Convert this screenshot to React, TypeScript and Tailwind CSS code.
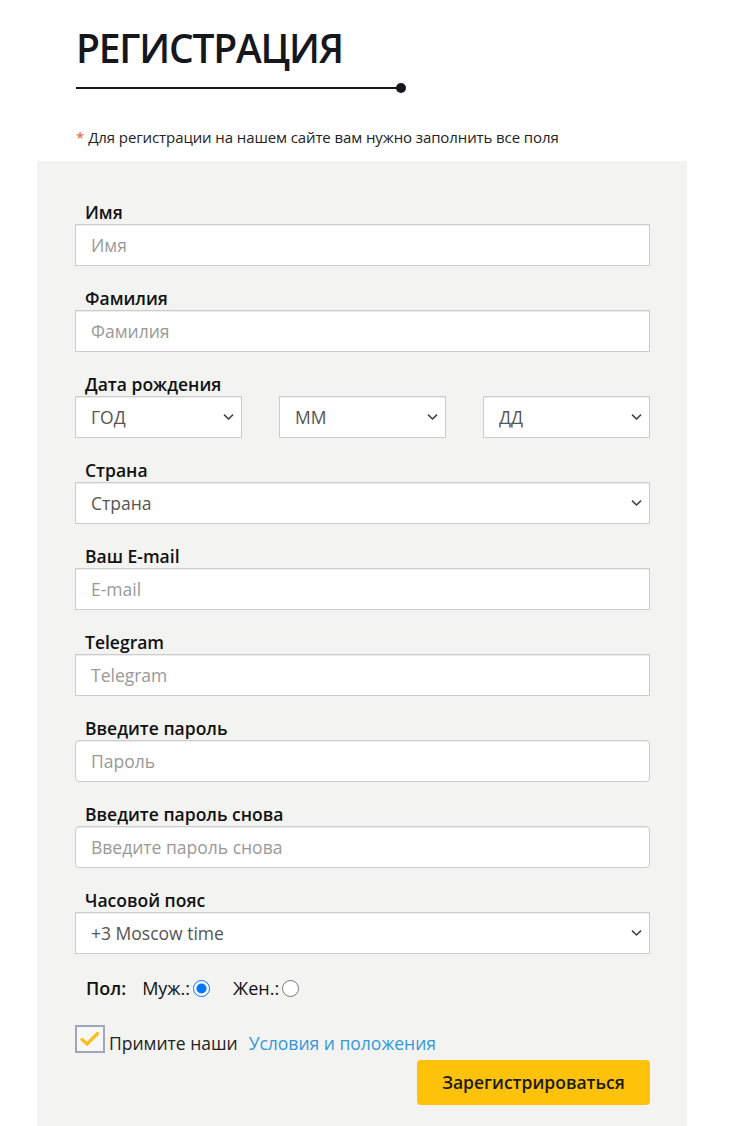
import React from "react";

const inputBase =
  "block w-full h-[42px] bg-white border border-[#cccccc] shadow-[inset_0_1px_1px_rgba(0,0,0,0.075)] px-[15px] text-[17.5px] text-[#555] placeholder:text-[#999] outline-none font-['Open_Sans',sans-serif]";

function Label({ children }: { children: React.ReactNode }) {
  return (
    <div className="pl-[10px] text-[17.5px] leading-[24px] font-semibold text-[#111]">
      {children}
    </div>
  );
}

function Chevron() {
  return (
    <svg
      className="pointer-events-none absolute right-[8px] top-1/2 -translate-y-1/2"
      width="11"
      height="7"
      viewBox="0 0 11 7"
      fill="none"
    >
      <path d="M1 1.2L5.5 5.5L10 1.2" stroke="#444" strokeWidth="1.6" />
    </svg>
  );
}

function Select({ value, className = "" }: { value: string; className?: string }) {
  return (
    <div className={"relative " + className}>
      <select
        className={inputBase + " appearance-none pr-8"}
        defaultValue={value}
      >
        <option>{value}</option>
      </select>
      <Chevron />
    </div>
  );
}

function Field({
  label,
  placeholder,
  rounded = false,
}: {
  label: string;
  placeholder: string;
  rounded?: boolean;
}) {
  return (
    <div className="mb-5">
      <Label>{label}</Label>
      <input
        className={inputBase + (rounded ? " rounded-[4px]" : "")}
        placeholder={placeholder}
        type="text"
      />
    </div>
  );
}

export default function App() {
  return (
    <div className="min-h-[1126px] bg-white font-['Open_Sans',sans-serif] text-[#111]">
      <div className="ml-[37px] w-[650px]">
        <div className="px-[39px] pt-[24px]">
          <h1 className="text-[39px] leading-[48px] font-semibold text-[#16171c] tracking-[-1.2px]">
            РЕГИСТРАЦИЯ
          </h1>
          <div className="mt-[11px] flex items-center w-[330px]">
            <div className="h-[2px] flex-1 bg-[#16171c]" />
            <div className="w-[10px] h-[10px] rounded-full bg-[#16171c] -ml-[1px]" />
          </div>
          <p className="mt-[34px] text-[15px] leading-[20px] text-[#222] tracking-[-0.1px]">
            <span className="text-[#f0542d] mr-[4px]">*</span>
            Для регистрации на нашем сайте вам нужно заполнить все поля
          </p>
        </div>

        <div className="mt-[14px] bg-[#f3f3f2] pl-[38px] pr-[37px] pt-[39px] pb-[24px]">
          <Field label="Имя" placeholder="Имя" />
          <Field label="Фамилия" placeholder="Фамилия" />

          <div className="mb-5">
            <Label>Дата рождения</Label>
            <div className="flex justify-between">
              <Select value="ГОД" className="w-[167px]" />
              <Select value="ММ" className="w-[167px]" />
              <Select value="ДД" className="w-[167px]" />
            </div>
          </div>

          <div className="mb-5">
            <Label>Страна</Label>
            <Select value="Страна" />
          </div>

          <Field label="Ваш E-mail" placeholder="E-mail" />
          <Field label="Telegram" placeholder="Telegram" />
          <Field label="Введите пароль" placeholder="Пароль" rounded />
          <Field
            label="Введите пароль снова"
            placeholder="Введите пароль снова"
            rounded
          />

          <div className="mb-5 mt-[5px]">
            <Label>Часовой пояс</Label>
            <Select value="+3 Moscow time" />
          </div>

          <div className="flex items-center pl-[11px] pt-[2px] text-[18px] leading-[24px]">
            <span className="font-semibold text-[#111]">Пол:</span>
            <span className="ml-[16px] text-[#111]">Муж.:</span>
            <input
              type="radio"
              name="sex"
              defaultChecked
              className="ml-[3px] w-[17px] h-[17px] m-0"
            />
            <span className="ml-[23px] text-[#111]">Жен.:</span>
            <input
              type="radio"
              name="sex"
              className="ml-[3px] w-[17px] h-[17px] m-0"
            />
          </div>

          <div className="mt-[25px] flex items-end">
            <div className="w-[30px] h-[28px] border-2 border-[#9ea6bd] bg-[#f7f7f7] flex items-center justify-center">
              <svg width="22" height="18" viewBox="0 0 22 18" fill="none">
                <path
                  d="M3 9.5L8 14L18.5 3.5"
                  stroke="#fbbf24"
                  strokeWidth="3.4"
                  strokeLinecap="round"
                  strokeLinejoin="round"
                />
              </svg>
            </div>
            <span className="ml-[4px] text-[17.5px] leading-[20px] text-[#222]">
              Примите наши
            </span>
            <a
              href="#"
              className="ml-[11px] text-[17.5px] leading-[20px] text-[#3498db]"
            >
              Условия и положения
            </a>
          </div>

          <div className="flex justify-end mt-[7px]">
            <button className="w-[233px] h-[45px] rounded-[4px] bg-[#fdc209] text-[17.5px] font-semibold text-[#1a1a1a]">
              Зарегистрироваться
            </button>
          </div>
        </div>
      </div>
    </div>
  );
}
